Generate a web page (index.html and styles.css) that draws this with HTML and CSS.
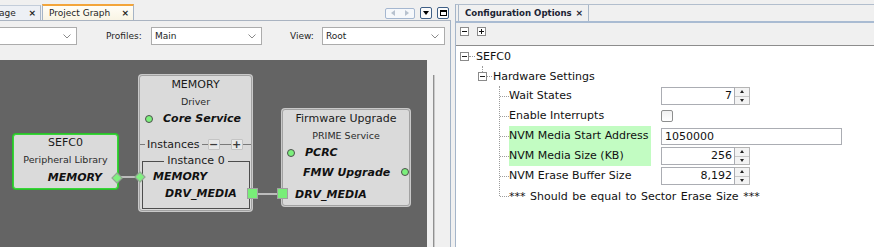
FILE: index.html
```html
<!DOCTYPE html>
<html>
<head>
<meta charset="utf-8" />
<title>Project Graph</title>
<link rel="stylesheet" href="styles.css">
</head>
<body>
<div class="app">
  <section class="left">
    <div class="tabbar">
      <div class="tab tab-off"><span>age</span><b class="x">×</b></div>
      <div class="tab tab-on"><span>Project Graph</span><b class="x">×</b></div>
      <div class="tab-tools">
        <span class="nav"><i class="tri-l"></i><i class="tri-r"></i></span>
        <span class="tbtn"><i class="tri-d"></i></span>
        <span class="tbtn"><i class="sq"></i></span>
      </div>
    </div>
    <div class="body">
      <div class="toolbar">
        <div class="combo c1"><span></span><svg class="chev" width="8" height="5" viewBox="0 0 8 5"><polyline points="0.5,0.5 4,4 7.5,0.5" fill="none" stroke="#8a8a8a"/></svg></div>
        <span class="lbl-p">Profiles:</span>
        <div class="combo c2"><span>Main</span><svg class="chev" width="8" height="5" viewBox="0 0 8 5"><polyline points="0.5,0.5 4,4 7.5,0.5" fill="none" stroke="#8a8a8a"/></svg></div>
        <span class="lbl-v">View:</span>
        <div class="combo c3"><span>Root</span><svg class="chev" width="8" height="5" viewBox="0 0 8 5"><polyline points="0.5,0.5 4,4 7.5,0.5" fill="none" stroke="#8a8a8a"/></svg></div>
      </div>
      <div class="graph-area">
        <div class="canvas">
          <div class="node sefc">
            <div class="n-title">SEFC0</div>
            <div class="n-sub">Peripheral Library</div>
            <div class="port p-end"><b>MEMORY</b></div>
          </div>

          <div class="node mem">
            <div class="n-title">MEMORY</div>
            <div class="n-sub">Driver</div>
            <div class="port core"><i class="dot"></i><b>Core Service</b></div>
            <div class="inst">
              <i class="ln l1"></i><span>Instances</span><i class="ln l2"></i><i class="pm">−</i><i class="ln l3"></i><i class="pm">+</i><i class="ln l4"></i>
            </div>
            <fieldset class="inst0">
              <legend>Instance 0</legend>
              <div class="port p-mem"><b>MEMORY</b></div>
              <div class="port p-drv"><b>DRV_MEDIA</b></div>
            </fieldset>
          </div>

          <div class="node fw">
            <div class="n-title">Firmware Upgrade</div>
            <div class="n-sub">PRIME Service</div>
            <div class="port pcrc"><i class="dot"></i><b>PCRC</b></div>
            <div class="port fmw"><b>FMW Upgrade</b><i class="dot"></i></div>
            <div class="port fdrv"><b>DRV_MEDIA</b></div>
          </div>

          <i class="wire w1"></i>
          <i class="dia d1"></i>
          <i class="dia d2"></i>
          <i class="wire w2"></i>
          <i class="plug q1"></i>
          <i class="plug q2"></i>
        </div>
        <div class="side"><div class="track"></div></div>
      </div>
    </div>
  </section>

  <section class="right">
    <div class="rtabbar">
      <div class="rtab"><span>Configuration Options</span><b class="x">×</b></div>
    </div>
    <div class="rtools">
      <span class="tb-box minus"></span>
      <span class="tb-box plus"></span>
    </div>
    <div class="tree">
      <div class="row r0"><span class="exp"></span><i class="hl h0"></i><span>SEFC0</span></div>
      <div class="row r1"><span class="exp"></span><i class="hl h1"></i><span>Hardware Settings</span></div>
      <div class="props">
        <div class="prop"><i class="hl"></i><span class="lbl">Wait States</span>
          <div class="spin"><span class="val">7</span><span class="arw"><i class="up"></i><i class="dn"></i></span></div>
        </div>
        <div class="prop"><i class="hl"></i><span class="lbl">Enable Interrupts</span>
          <span class="check"></span>
        </div>
        <div class="prop"><i class="hl"></i><span class="lbl green">NVM Media Start Address</span>
          <div class="field">1050000</div>
        </div>
        <div class="prop"><i class="hl"></i><span class="lbl green">NVM Media Size (KB)</span>
          <div class="spin"><span class="val">256</span><span class="arw"><i class="up"></i><i class="dn"></i></span></div>
        </div>
        <div class="prop"><i class="hl"></i><span class="lbl">NVM Erase Buffer Size</span>
          <div class="spin"><span class="val">8,192</span><span class="arw"><i class="up"></i><i class="dn"></i></span></div>
        </div>
        <div class="prop last"><i class="hl"></i><span class="note">*** Should be equal to Sector Erase Size ***</span></div>
      </div>
    </div>
  </section>
</div>
</body>
</html>
```

FILE: styles.css
```css
* {
	box-sizing: border-box;
}

body {
	margin: 0;
	width: 874px;
	height: 247px;
	overflow: hidden;
	background: #f0f0f0;
	font-family: "DejaVu Sans", Verdana, sans-serif;
	color: #1e1e1e;
}

.app {
	display: flex;
	height: 247px;
}

/* ---------- left panel ---------- */

.left {
	width: 451px;
	display: flex;
	flex-direction: column;
}

.tabbar {
	height: 21px;
	display: flex;
	align-items: flex-end;
	border-bottom: 1px solid #a9b3c1;
	font-size: 9px;
}

.tab {
	display: flex;
	align-items: center;
	white-space: nowrap;
}

.tab .x {
	font-size: 9px;
	margin-left: auto;
	margin-right: 4px;
}

.tab-off {
	width: 41px;
	height: 15px;
	border-top: 1px solid #c3cdda;
	border-right: 1px solid #aab8ca;
	background: #edf0f5;
}

.tab-off span {
	margin-left: -1px;
}

.tab-on {
	width: 92px;
	height: 16px;
	margin-left: 1px;
	padding-left: 6px;
	border: 1px solid #a6b4c6;
	border-top: 2px solid #f3a53a;
	border-bottom: none;
	background: linear-gradient(#fffdf6, #f9f4e4);
}

.tab-tools {
	margin-left: auto;
	margin-right: 2px;
	align-self: flex-start;
	margin-top: 7px;
	display: flex;
	align-items: center;
}

.nav {
	width: 30px;
	height: 11px;
	border: 1px solid #a5b7d0;
	border-radius: 2px;
	background: #f6f8fb;
	display: flex;
	justify-content: space-around;
	align-items: center;
}

.tri-l {
	border-top: 3px solid transparent;
	border-bottom: 3px solid transparent;
	border-right: 4px solid #b8c2cf;
}

.tri-r {
	border-top: 3px solid transparent;
	border-bottom: 3px solid transparent;
	border-left: 4px solid #b8c2cf;
}

.tbtn {
	width: 12px;
	height: 12px;
	margin-left: 5px;
	border: 1px solid #3f5f86;
	border-radius: 2px;
	background: #fbfbfb;
	display: flex;
	align-items: center;
	justify-content: center;
}

.tri-d {
	border-left: 3.5px solid transparent;
	border-right: 3.5px solid transparent;
	border-top: 4px solid #000;
}

.sq {
	width: 7px;
	height: 6px;
	border: 1px solid #000;
	border-top-width: 2px;
}

.body {
	flex: 1;
	display: flex;
	flex-direction: column;
	border-right: 1px solid #a3b3c6;
}

.toolbar {
	height: 39px;
	padding-top: 6px;
	display: flex;
	align-items: flex-start;
	font-size: 9px;
}

.combo {
	height: 18px;
	border: 1px solid #acacac;
	background: #fff;
	display: flex;
	align-items: center;
	padding: 0 5px 0 3px;
}

.combo span {
	flex: 1;
}

.c1 {
	width: 79px;
	margin-left: -2px;
}

.c2 {
	width: 111px;
}

.c3 {
	width: 123px;
}

.lbl-p,
.lbl-v {
	line-height: 18px;
}

.lbl-p {
	margin-left: 29px;
	width: 45px;
}

.lbl-v {
	margin-left: 28px;
	width: 32px;
}

.graph-area {
	flex: 1;
	display: flex;
}

.canvas {
	width: 427px;
	background: #646464;
	position: relative;
}

.side {
	flex: 1;
	padding: 15px 0 0 6px;
}

.track {
	width: 2px;
	height: 100%;
	border-left: 1px solid #909090;
	background: #c9c9c9;
}

/* ---------- graph nodes ---------- */

.node {
	position: absolute;
	background: #dadada;
	border: 1px solid #a2a2a2;
	border-radius: 3px;
	box-shadow: 0 0 0 1px #c9c9c9;
	color: #1a1a1a;
	white-space: nowrap;
}

.n-title {
	font-size: 11px;
	line-height: 17px;
	text-align: center;
}

.n-sub {
	font-size: 9.5px;
	line-height: 17px;
	text-align: center;
	color: #2a2a2a;
}

.port {
	display: flex;
	align-items: center;
	height: 17px;
}

.port b {
	flex-shrink: 0;
	font-size: 11px;
	font-style: italic;
	font-weight: bold;
	color: #111;
}

.dot {
	flex-shrink: 0;
	width: 8px;
	height: 8px;
	border-radius: 50%;
	background: #7cf07c;
	border: 1px solid #4e4e4e;
}

.sefc {
	left: 13px;
	top: 74px;
	width: 105px;
	height: 55px;
	border-color: #38d438;
	box-shadow: 0 0 0 1px #2cbf2c;
}

.sefc .n-title {
	line-height: 16px;
}

.sefc .n-sub {
	line-height: 18px;
}

.p-end {
	justify-content: flex-end;
	padding-right: 15px;
}

.mem {
	left: 139px;
	top: 15px;
	width: 113px;
	height: 136px;
}

.core {
	padding-left: 5px;
}

.core .dot {
	margin-right: 10px;
}

.inst {
	margin-top: 9px;
	height: 17px;
	display: flex;
	align-items: center;
	font-size: 11px;
}

.inst span {
	margin: 0 2px;
}

.ln {
	height: 1px;
	background: #7a7a7a;
}

.l1 {
	width: 5px;
}

.l2 {
	width: 6px;
}

.l3 {
	width: 11px;
}

.l4 {
	flex: 1;
}

.pm {
	flex-shrink: 0;
	width: 12px;
	height: 11px;
	border: 1px solid #c4c4c4;
	border-radius: 1px;
	background: #e8e8e8;
	font-style: normal;
	font-weight: bold;
	font-size: 11px;
	line-height: 9px;
	text-align: center;
	color: #3a3a3a;
}

.inst0 {
	margin: 1px 1px 0 2px;
	padding: 0 0 6px;
	border: 1px solid #4d4d4d;
}

.inst0 legend {
	margin: 0 auto;
	padding: 0 3px;
	font-size: 11px;
	line-height: 14px;
}

.p-mem {
	padding-left: 10px;
}

.p-drv {
	padding-left: 22px;
}

.fw {
	left: 282px;
	top: 49px;
	width: 128px;
	height: 97px;
}

.pcrc {
	padding-left: 4px;
}

.pcrc .dot {
	margin-right: 10px;
}

.fmw {
	margin-top: 2px;
	height: 18px;
	padding-left: 20px;
}

.fmw .dot {
	margin-left: 11px;
}

.fdrv {
	margin-top: 4px;
	height: 18px;
	padding-left: 12px;
}

.wire {
	position: absolute;
	height: 2px;
	background: #bcbcbc;
}

.w1 {
	left: 118px;
	top: 116px;
	width: 21px;
}

.w2 {
	left: 258px;
	top: 133px;
	width: 19px;
}

.dia {
	position: absolute;
	width: 8px;
	height: 8px;
	background: #80f080;
	border: 1px solid #9a9a9a;
	transform: rotate(45deg);
}

.d1 {
	left: 113px;
	top: 114px;
}

.d2 {
	left: 136px;
	top: 113px;
}

.plug {
	position: absolute;
	width: 11px;
	height: 11px;
	background: #78ee78;
	border: 1px solid #a0a0a0;
}

.q1 {
	left: 247px;
	top: 128px;
}

.q2 {
	left: 277px;
	top: 128px;
}

/* ---------- right panel ---------- */

.right {
	flex: 1;
	margin-left: 4px;
	margin-top: 4px;
	border-left: 1px solid #a5b5c9;
	display: flex;
	flex-direction: column;
}

.rtabbar {
	height: 19px;
	border-top: 1px solid #b2becd;
	border-bottom: 2px solid #a9bbd2;
	display: flex;
}

.rtab {
	width: 131px;
	margin-left: 2px;
	padding: 0 5px 0 6px;
	border-left: 1px solid #a9b7c8;
	border-right: 1px solid #a9b7c8;
	display: flex;
	align-items: center;
	white-space: nowrap;
	font-size: 8.6px;
	font-weight: bold;
	color: #1c2434;
}

.rtab .x {
	margin-left: auto;
	font-size: 9px;
}

.rtools {
	height: 23px;
	padding: 4px 0 0 4px;
	border-bottom: 1px solid #8c8c8c;
	display: flex;
	align-items: flex-start;
	gap: 8px;
}

.tb-box {
	width: 9px;
	height: 9px;
	border: 1px solid #8a8a8a;
	background: #fff;
	position: relative;
}

.tb-box::before,
.plus::after {
	content: "";
	position: absolute;
	left: 1px;
	top: 3px;
	width: 5px;
	height: 1px;
	background: #111;
}

.plus::after {
	left: 3px;
	top: 1px;
	width: 1px;
	height: 5px;
}

.tree {
	flex: 1;
	background: #fff;
	font-size: 11px;
	color: #111;
}

.row {
	height: 20px;
	display: flex;
	align-items: center;
	position: relative;
}

.r0 {
	padding-left: 4px;
}

.r1 {
	padding-left: 22px;
}

.r1::before {
	content: "";
	position: absolute;
	left: 26px;
	top: 0;
	height: 6px;
	border-left: 1px dotted #9c9c9c;
}

.exp {
	width: 9px;
	height: 9px;
	border: 1px solid #8a8a8a;
	background: #fff;
	position: relative;
}

.exp::before {
	content: "";
	position: absolute;
	left: 1px;
	top: 3px;
	width: 5px;
	height: 1px;
	background: #222;
}

.hl {
	height: 0;
	border-top: 1px dotted #9c9c9c;
}

.h0 {
	width: 6px;
	margin-right: 1px;
}

.h1 {
	width: 5px;
	margin-right: 1px;
}

.props {
	margin-left: 43px;
	position: relative;
}

.props::before {
	content: "";
	position: absolute;
	left: 0;
	top: 0;
	height: 110px;
	border-left: 1px dotted #9c9c9c;
}

.prop {
	height: 20px;
	display: flex;
	align-items: center;
}

.prop .hl {
	width: 9px;
	margin-left: 1px;
}

.lbl {
	width: 142px;
	line-height: 20px;
	margin-right: 10px;
	white-space: nowrap;
}

.green {
	background: #c2fcc2;
}

.spin {
	width: 89px;
	height: 18px;
	display: flex;
}

.val {
	flex: 1;
	border: 1px solid #abadb3;
	background: #fff;
	text-align: right;
	padding-right: 2px;
	line-height: 16px;
}

.arw {
	width: 15px;
	display: flex;
	flex-direction: column;
	border: 1px solid #b4b4b4;
	border-left: none;
	background: #f3f3f3;
}

.arw i {
	flex: 1;
	display: flex;
	align-items: center;
	justify-content: center;
}

.arw .up {
	border-bottom: 1px solid #c8c8c8;
}

.arw .up::before {
	content: "";
	border-left: 2.5px solid transparent;
	border-right: 2.5px solid transparent;
	border-bottom: 3px solid #222;
}

.arw .dn::before {
	content: "";
	border-left: 2.5px solid transparent;
	border-right: 2.5px solid transparent;
	border-top: 3px solid #222;
}

.check {
	width: 12px;
	height: 12px;
	border: 1px solid #8e8f8f;
	border-radius: 2px;
	background: linear-gradient(#f0f0f0, #fff);
}

.field {
	width: 181px;
	height: 17px;
	border: 1px solid #abadb3;
	background: #fff;
	padding-left: 3px;
	line-height: 15px;
}

.note {
	white-space: nowrap;
	word-spacing: 1px;
}
```
